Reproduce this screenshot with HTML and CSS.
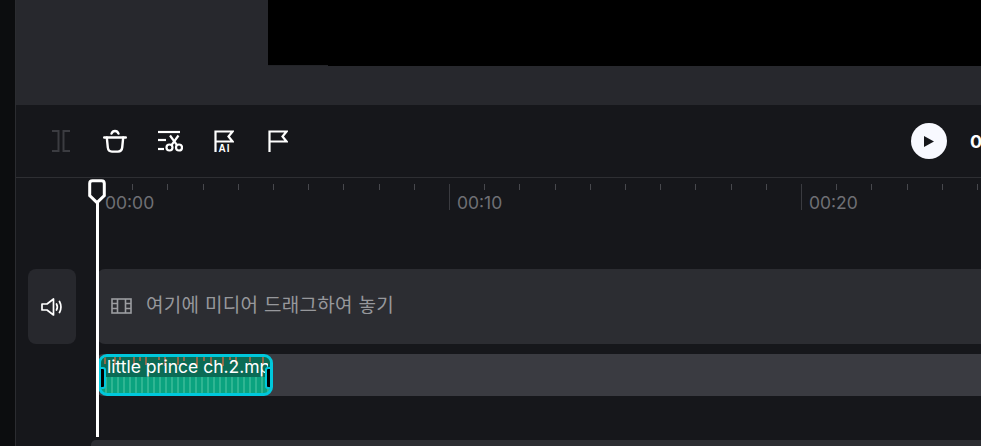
FILE: index.html
```html
<!DOCTYPE html>
<html lang="ko">
<head>
  <meta charset="UTF-8">
  <meta name="viewport" content="width=device-width, initial-scale=1.0">
  <title>Timeline Editor</title>
  <link rel="stylesheet" href="styles.css">
</head>
<body>
  <div class="app">
    <div class="sidebar"></div>

    <div class="main">
      <!-- Preview -->
      <div class="preview">
        <div class="preview-side"></div>
        <div class="canvas"><div class="canvas-notch"></div></div>
      </div>

      <!-- Toolbar -->
      <div class="toolbar">
        <div class="tools">
          <button class="tool tool-split" aria-label="Split">
            <svg width="18" height="24" viewBox="0 0 18 24" fill="none" stroke="currentColor" stroke-width="2">
              <path d="M0 2H6.5V22H0"/>
              <path d="M18 2H11.5V22H18"/>
            </svg>
          </button>
          <button class="tool tool-trash" aria-label="Delete">
            <svg width="24" height="24" viewBox="0 0 24 24" fill="none" stroke="currentColor" stroke-width="2.4" stroke-linecap="round">
              <path d="M1.2 8.5H22.8"/>
              <path d="M3.8 8.5L4.8 18.5Q5.3 22.6 9 22.6H15Q18.7 22.6 19.2 18.5L20.2 8.5"/>
              <path d="M8.5 4.6Q9.5 2 12 2Q14.5 2 15.5 4.6"/>
            </svg>
          </button>
          <button class="tool tool-trim" aria-label="Trim">
            <svg width="26" height="22" viewBox="0 0 26 22" fill="none" stroke="currentColor" stroke-width="2.2">
              <path d="M1 2H23"/>
              <path d="M1 10H9"/>
              <path d="M1 19H7"/>
              <circle cx="12.5" cy="17.5" r="3"/>
              <circle cx="22" cy="17.5" r="3"/>
              <path d="M14.5 15.2L21.5 5.5"/>
              <path d="M20 15.2L13 5.5"/>
            </svg>
          </button>
          <button class="tool tool-flag-ai" aria-label="AI marker">
            <svg width="20" height="24" viewBox="0 0 20 24" fill="none" stroke="currentColor" stroke-width="2.2">
              <path d="M1.5 23V2.5H18.5L14.5 7.5L18.5 12.5H1.5"/>
              <text x="4.5" y="23" class="ai-label">AI</text>
            </svg>
          </button>
          <button class="tool tool-flag" aria-label="Marker">
            <svg width="20" height="24" viewBox="0 0 20 24" fill="none" stroke="currentColor" stroke-width="2.2">
              <path d="M1.5 23V2.5H18.5L14.5 7.5L18.5 12.5H1.5"/>
            </svg>
          </button>
        </div>
        <button class="play" aria-label="Play">
          <svg width="10" height="11" viewBox="0 0 10 11"><path d="M0 0L10 5.5L0 11Z" fill="#16171b"/></svg>
        </button>
        <div class="timecode">00:00:00</div>
      </div>

      <!-- Timeline -->
      <div class="timeline">
        <div class="ruler">
          <div class="ruler-cell"><span>00:00</span></div>
          <div class="ruler-cell"><span>00:10</span></div>
          <div class="ruler-cell"><span>00:20</span></div>
        </div>

        <div class="track-row">
          <button class="mute" aria-label="Volume">
            <svg width="22" height="18" viewBox="0 0 22 18" fill="none" stroke="#fff" stroke-width="1.7" stroke-linejoin="round" stroke-linecap="round">
              <path d="M1 6H6L12.5 1V17L6 12H1Z"/>
              <path d="M15.5 6Q17.2 9 15.5 12"/>
              <path d="M18.5 3.5Q21.4 9 18.5 14.5"/>
            </svg>
          </button>
          <div class="drop-zone">
            <svg width="21" height="16" viewBox="0 0 21 16" fill="none" stroke="#9c9da1" stroke-width="1.6">
              <rect x="1" y="1" width="19" height="14"/>
              <path d="M6.5 1V15M14.5 1V15M1 5.5H6.5M1 10.5H6.5M14.5 5.5H20M14.5 10.5H20"/>
            </svg>
            <span>여기에 미디어 드래그하여 놓기</span>
          </div>
        </div>

        <div class="clip-track">
          <div class="clip">
            <svg class="wave" width="169" height="20" viewBox="0 0 169 20">
              <path d="M4 0V7M14 0V8M19 0V3M33 0V9M39 0V4M45 0V8M58 0V3M64 0V9M77 0V8M83 0V4M96 0V9M103 0V4M110 0V7M122 0V9M129 0V3M135 0V7M149 0V5M162 0V8" stroke="#8f6a48" stroke-width="2"/>
            </svg>
            <span class="clip-name">little prince ch.2.mp4</span>
            <i class="handle handle-left"></i>
            <i class="handle handle-right"></i>
          </div>
        </div>

        <div class="scrollbar"></div>

        <div class="playhead">
          <svg width="18" height="26" viewBox="0 0 18 26">
            <path d="M4.5 1.7H13.5Q16.3 1.7 16.3 4.5V16.5L9 23.6L1.7 16.5V4.5Q1.7 1.7 4.5 1.7Z" fill="#16171b" stroke="#fff" stroke-width="3"/>
          </svg>
          <div class="playhead-line"></div>
        </div>
      </div>
    </div>
  </div>
</body>
</html>
```

FILE: styles.css
```css
html, body {
  margin: 0;
  height: 100%;
  overflow: hidden;
  background-color: #16171b;
  font-family: Inter, 'Liberation Sans', sans-serif;
}

.app {
  display: flex;
  height: 446px;
}

.sidebar {
  width: 15px;
  flex: none;
  background-color: #0c0d0f;
  border-right: 1px solid #2b2c30;
}

.main {
  flex: 1;
  min-width: 0;
  display: flex;
  flex-direction: column;
}

/* Preview */
.preview {
  height: 105px;
  flex: none;
  display: flex;
  background-color: #27282d;
}

.preview-side {
  width: 252px;
  flex: none;
}

.canvas {
  flex: 1;
  height: 66px;
  background-color: #000;
}

.canvas-notch {
  width: 60px;
  height: 1px;
  margin-top: 65px;
  background-color: #232428;
}

/* Toolbar */
.toolbar {
  height: 72px;
  flex: none;
  display: flex;
  align-items: center;
  padding-left: 36px;
  border-bottom: 1px solid #2e2f33;
  box-sizing: content-box;
  overflow: hidden;
}

.tools {
  display: flex;
  align-items: center;
}

button {
  padding: 0;
  border: none;
  background: none;
  cursor: pointer;
}

.tool {
  display: flex;
  color: #fff;
}

.tool-split {
  color: #3b3c41;
  margin-right: 33px;
}

.tool-trash {
  margin-right: 30px;
}

.tool-trim {
  margin-right: 31px;
}

.tool-flag-ai {
  margin-right: 34px;
}

.ai-label {
  font-size: 10px;
  font-weight: 700;
  fill: #fff;
  stroke: none;
  letter-spacing: 1px;
}

.play {
  width: 36px;
  height: 36px;
  flex: none;
  margin-left: 623px;
  display: flex;
  align-items: center;
  justify-content: center;
  border-radius: 50%;
  background-color: #f8f9ff;
}

.timecode {
  margin-left: 23px;
  flex: none;
  color: #fff;
  font-size: 18px;
  font-weight: 700;
}

/* Timeline */
.timeline {
  flex: 1;
  position: relative;
  overflow: hidden;
}

.ruler {
  height: 91px;
  display: flex;
  padding-left: 81px;
}

.ruler-cell {
  width: 352px;
  height: 26px;
  flex: none;
  margin-top: 6px;
  padding-left: 7px;
  box-sizing: border-box;
  border-left: 1px solid #3a3b40;
  background-image: repeating-linear-gradient(to right, transparent 0, transparent 34.2px, #47484d 34.2px, #47484d 35.2px);
  background-size: 100% 6px;
  background-repeat: no-repeat;
  color: #6f7075;
  font-size: 17.5px;
  line-height: 24px;
}

.ruler-cell span {
  display: block;
  margin-top: 7px;
}

.track-row {
  display: flex;
  height: 75px;
  padding-left: 12px;
}

.mute {
  width: 48px;
  flex: none;
  margin-right: 21px;
  display: flex;
  align-items: center;
  justify-content: center;
  border-radius: 8px;
  background-color: #27282d;
}

.drop-zone {
  flex: 1;
  display: flex;
  align-items: center;
  gap: 14px;
  padding-left: 14px;
  border-radius: 8px 0 0 8px;
  background-color: #2c2d32;
  color: #97989c;
  font-family: 'Noto Sans CJK KR', sans-serif;
  font-size: 19px;
  letter-spacing: 0.3px;
}

.drop-zone svg {
  margin-top: -2px;
}

.drop-zone span {
  margin-bottom: 6px;
}

.clip-track {
  height: 42px;
  margin: 10px 0 0 81px;
  border-radius: 6px 0 0 6px;
  background-color: #3a3b41;
}

.clip {
  position: relative;
  width: 175px;
  height: 42px;
  margin-left: 1px;
  box-sizing: border-box;
  border: 3px solid #00c8dc;
  border-radius: 9px;
  overflow: hidden;
  background: repeating-linear-gradient(to right, #0aa37f 0, #0aa37f 4px, #2fb592 4px, #2fb592 6px);
}

.wave {
  position: absolute;
  top: 0;
  left: 0;
  background-color: #0b6b55;
}

.clip-name {
  position: absolute;
  top: 0;
  left: 6px;
  right: 2px;
  overflow: hidden;
  white-space: nowrap;
  color: #fff;
  font-size: 17.5px;
  line-height: 20px;
}

.handle {
  position: absolute;
  top: 10px;
  width: 4px;
  height: 18px;
  background-color: #000;
  border: 2px solid #00c8dc;
  border-radius: 3px;
}

.handle-left {
  left: -3px;
}

.handle-right {
  right: -3px;
}

.scrollbar {
  height: 6px;
  margin: 44px 0 0 75px;
  border-radius: 5px 0 0 0;
  background-color: #2c2d32;
}

.playhead {
  position: absolute;
  top: 1px;
  left: 72px;
  width: 18px;
}

.playhead svg {
  display: block;
}

.playhead-line {
  width: 3px;
  height: 235px;
  margin: -3px 0 0 7.5px;
  background-color: #fff;
}
```
